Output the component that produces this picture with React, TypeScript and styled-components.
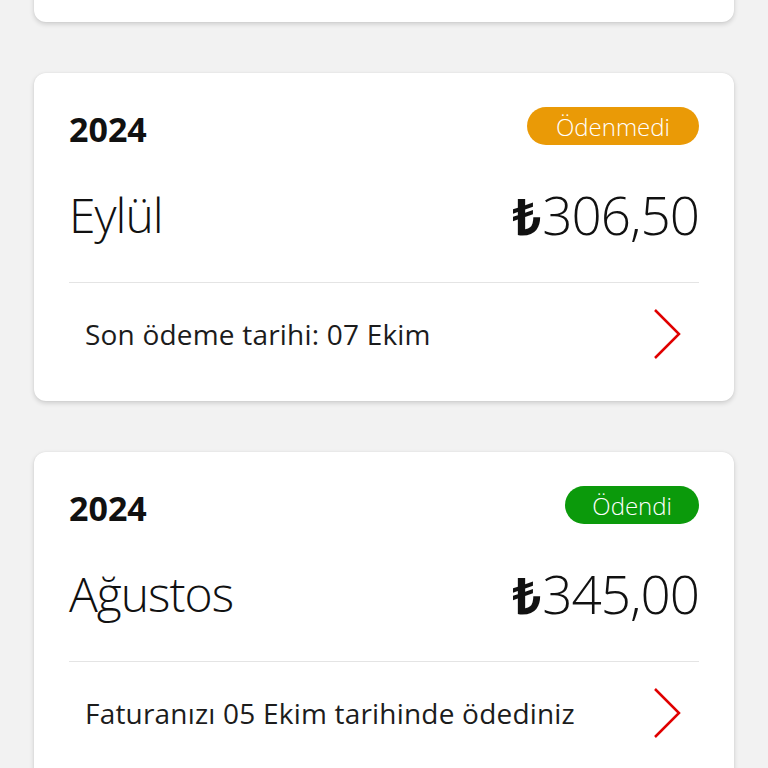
import React, { FC } from "react";
import styled, { createGlobalStyle } from "styled-components";

const GlobalStyle = createGlobalStyle`
  html, body {
    margin: 0;
    padding: 0;
    background: #f2f2f2;
    overflow: hidden;
  }
  body {
    font-family: "Open Sans", "DejaVu Sans", sans-serif;
    color: #1a1a1a;
  }
`;

type Status = "paid" | "unpaid";

interface Bill {
  year: string;
  month: string;
  amount: string;
  status: Status;
  note: string;
}

const bills: Bill[] = [
  {
    year: "2024",
    month: "Ekim",
    amount: "312,40",
    status: "unpaid",
    note: "Son ödeme tarihi: 07 Kasım",
  },
  {
    year: "2024",
    month: "Eylül",
    amount: "306,50",
    status: "unpaid",
    note: "Son ödeme tarihi: 07 Ekim",
  },
  {
    year: "2024",
    month: "Ağustos",
    amount: "345,00",
    status: "paid",
    note: "Faturanızı 05 Ekim tarihinde ödediniz",
  },
];

// list is scrolled: the first card is mostly above the fold
const Feed = styled.div`
  display: flex;
  flex-direction: column;
  gap: 51px;
  padding: 0 34px;
  margin-top: -306px;
`;

const Card = styled.section`
  background: #fff;
  border-radius: 12px;
  box-shadow: 0 2px 5px rgba(0, 0, 0, 0.16), 0 0 2px rgba(0, 0, 0, 0.06);
  padding: 34px 35px 16px;
  height: 328px;
  box-sizing: border-box;
  display: flex;
  flex-direction: column;
`;

const Header = styled.div`
  display: flex;
  align-items: center;
  justify-content: space-between;
  height: 38px;
`;

const Year = styled.span`
  font-size: 34px;
  font-weight: 700;
  color: #111;
  margin-top: 6px;
`;

const Badge = styled.span<{ status: Status }>`
  display: inline-flex;
  align-items: center;
  height: 38px;
  padding: 0 ${({ status }) => (status === "paid" ? 27 : 29)}px;
  border-radius: 19px;
  background: ${({ status }) => (status === "paid" ? "#0b9a0b" : "#ea9a06")};
  color: #fff;
  font-size: 24px;
  font-weight: 300;
  box-sizing: border-box;
`;

const MainRow = styled.div`
  display: flex;
  align-items: center;
  justify-content: space-between;
  height: 137px;
  padding-top: 2px;
  box-sizing: border-box;
`;

const Month = styled.span`
  font-size: 48px;
  font-weight: 300;
  color: #111;
  letter-spacing: -1px;
`;

const Amount = styled.span`
  display: inline-flex;
  align-items: baseline;
  font-size: 53px;
  font-weight: 300;
  color: #111;
  letter-spacing: -1px;
`;

const Lira = styled.span`
  font-family: "Noto Sans", "DejaVu Sans", sans-serif;
  font-weight: 700;
  font-size: 50px;
  letter-spacing: 0;
  margin-right: 1px;
`;

const Divider = styled.hr`
  border: 0;
  height: 1px;
  background: #e4e4e4;
  margin: 0;
`;

const Footer = styled.div`
  display: flex;
  align-items: center;
  justify-content: space-between;
  flex: 1;
  padding: 0 18px 0 16px;
`;

const Note = styled.span`
  font-size: 28px;
  font-weight: 400;
  color: #1c1c1c;
  letter-spacing: 0.2px;
`;

const Chevron: FC = () => (
  <svg width="28" height="52" viewBox="0 0 28 52" fill="none">
    <polyline
      points="2,2 26,26 2,50"
      stroke="#e00000"
      strokeWidth="2.5"
      strokeLinejoin="miter"
    />
  </svg>
);

const BillCard: FC<{ bill: Bill }> = ({ bill }) => (
  <Card>
    <Header>
      <Year>{bill.year}</Year>
      <Badge status={bill.status}>
        {bill.status === "paid" ? "Ödendi" : "Ödenmedi"}
      </Badge>
    </Header>
    <MainRow>
      <Month>{bill.month}</Month>
      <Amount>
        <Lira>₺</Lira>
        {bill.amount}
      </Amount>
    </MainRow>
    <Divider />
    <Footer>
      <Note>{bill.note}</Note>
      <Chevron />
    </Footer>
  </Card>
);

const App: FC = () => (
  <>
    <GlobalStyle />
    <Feed>
      {bills.map((bill, i) => (
        <BillCard key={i} bill={bill} />
      ))}
    </Feed>
  </>
);

export default App;
